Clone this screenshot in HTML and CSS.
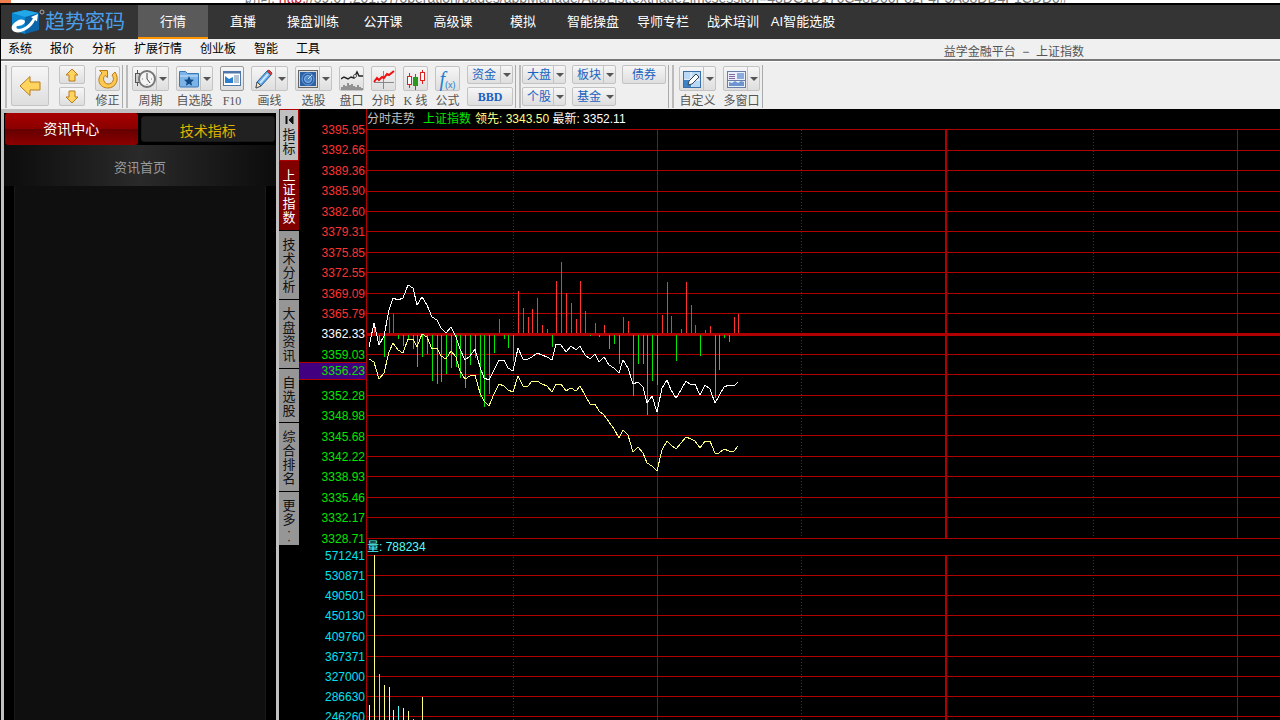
FILE: index.html
```html
<!DOCTYPE html>
<html lang="zh-CN">
<head>
<meta charset="utf-8">
<title>益学金融平台 - 上证指数</title>
<link rel="stylesheet" href="styles.css">
</head>
<body>
<div class="backdrop"><span class="backdrop-tab"></span><span class="backdrop-text">访问: <span class="backdrop-url">http:</span>//59.67.201.97/operation/pages/appManage/AppList.exthage2imcsession=43DC1D176C48D00F82F4F5A88DD4F1CDD0#</span></div>
<div class="app">
  <header class="top">
    <div class="logo">
      <svg width="34" height="26" viewBox="0 0 34 26"><path d="M1 4 14 1v24L1 21z" fill="#0a86cf"/><path d="M14 1 28 4v17l-14 4z" fill="#0b63a8"/><path d="M1 4 14 1 28 4 14 8z" fill="#22a8e8"/><path d="M27 5l-7 3 2 1.500C18 16 12 20 8 20c-3 0-3-2-2-3 3 0 7-1 8-4 0-3-5-3-8-1-5 3-7 7-4 10 5 4 18-1 22-11l2 1.500z" fill="#fff"/><circle cx="31" cy="3" r="2" fill="none" stroke="#aaa"/></svg>
      <span class="brand">趋势密码</span>
    </div>
    <nav class="nav">
      <a href="#" class="active">行情</a><a href="#">直播</a><a href="#">操盘训练</a><a href="#">公开课</a><a href="#">高级课</a><a href="#">模拟</a><a href="#">智能操盘</a><a href="#">导师专栏</a><a href="#">战术培训</a><a href="#">AI智能选股</a>
    </nav>
  </header>
  <div class="menubar">
    <button>系统</button><button>报价</button><button>分析</button><button>扩展行情</button><button>创业板</button><button>智能</button><button>工具</button>
    <h1 class="title">益学金融平台&nbsp; −&nbsp; 上证指数</h1>
  </div>
  <div class="toolbar">
    <div class="group nav-group">
      <button class="btn back" aria-label="后退"><svg width="24" height="24" viewBox="0 0 24 24"><path d="M2 12 12 2.500V8h10v8H12v5.500z" fill="#ffd45e" stroke="#b87a1c"/></svg></button>
      <div class="stack">
        <button class="btn small" aria-label="上"><svg width="14" height="14" viewBox="0 0 14 14"><path d="M7 1 13 7h-3v6H4V7H1z" fill="#ffd45e" stroke="#b87a1c"/></svg></button>
        <button class="btn small" aria-label="下"><svg width="14" height="14" viewBox="0 0 14 14"><path d="M7 13 13 7h-3V1H4v6H1z" fill="#ffd45e" stroke="#b87a1c"/></svg></button>
      </div>
      <div class="tool"><button class="btn icon" aria-labelledby="l1"><svg width="22" height="22" viewBox="0 0 22 22"><path d="M2.500 2.500h8v7L8 7.500C5 10 7 16 11 16c5 0 7-5 4-9l3-3c5 7 1 16-7 16C2 20-1 11 5 5z" fill="#ffc94d" stroke="#b87a1c"/></svg></button><span id="l1">修正</span></div>
    </div>
    <div class="group">
      <div class="tool wide"><button class="btn icon split" aria-labelledby="l2"><svg width="22" height="22" viewBox="0 0 22 22"><path d="M3.500 2v3M3.500 14v4" stroke="#555"/><rect x="1.500" y="5.500" width="4" height="9" fill="#ccc" stroke="#555"/><circle cx="13" cy="11" r="8" fill="#f4f4f4" stroke="#777" stroke-width="2"/><path d="M13 5v6l3 4" fill="none" stroke="#444"/><path d="M8 11h1M17 11h1M13 17v-1" stroke="#777"/></svg><i></i></button><span id="l2">周期</span></div>
      <div class="tool wide"><button class="btn icon split" aria-labelledby="l3"><svg width="22" height="22" viewBox="0 0 22 22"><path d="M1.500 18V3.500h6l2 2h11V18q0 1-1 1h-17q-1 0-1-1z" fill="#7db4e8" stroke="#3b78b8"/><path d="M2 8h18" stroke="#cfe5fa"/><path d="m11 8 1.500 3.500 3.500.3-2.700 2.400.8 3.600-3.100-2-3.100 2 .8-3.600L6 11.800l3.500-.3z" fill="#134b86"/></svg><i></i></button><span id="l3">自选股</span></div>
      <div class="tool narrow"><button class="btn icon framed" aria-labelledby="l4"><svg width="20" height="20" viewBox="0 0 20 20"><rect x="1.500" y="2.500" width="17" height="14" fill="#fff" stroke="#4f78a8"/><path d="M2 3.500h16" stroke="#4f78a8" stroke-width="2"/><path d="M3 7l4 3 4-2v6H3z" fill="#2a80cf"/><path d="M12 7h5M12 9h5M12 11h5M12 13h5" stroke="#6b89aa"/></svg></button><span id="l4" class="serif">F10</span></div>
      <div class="tool wide"><button class="btn icon split" aria-labelledby="l5"><svg width="22" height="22" viewBox="0 0 22 22"><path d="M4 14 14 3l4 4L8 18l-5 2z" fill="#62a8e4" stroke="#2f659b"/><path d="m14 3 2-1 3 3-1 2z" fill="#d63c3c" stroke="#a33"/><path d="m4 14 4 4-5 2z" fill="#f7e7c2" stroke="#555"/><path d="M7 15 15 6" stroke="#cce6ff" stroke-width="2"/></svg><i></i></button><span id="l5">画线</span></div>
      <div class="tool wide"><button class="btn icon split" aria-labelledby="l6"><svg width="22" height="22" viewBox="0 0 22 22"><rect x="1.500" y="2.500" width="19" height="17" fill="#ddd" stroke="#666"/><rect x="3" y="4" width="16" height="14" fill="#2e62a5"/><circle cx="11" cy="11" r="6" fill="none" stroke="#6a9fdc"/><circle cx="11" cy="11" r="3.500" fill="#4d88cc" stroke="#8dbcf0"/><path d="M11 11 15 7" stroke="#cfe5ff"/></svg><i></i></button><span id="l6">选股</span></div>
      <div class="tool"><button class="btn icon" aria-labelledby="l7"><svg width="22" height="22" viewBox="0 0 22 22"><path d="M0 11 3 9l4 2 3-2 3 1 3-6 2 4h4" fill="none" stroke="#222" stroke-width="1.500"/><circle cx="14" cy="8" r="1.500" fill="#fff" stroke="#555"/><path d="M1 22v-3M3 22v-5M5 22v-4M7 22v-7M9 22v-5M11 22v-6M13 22v-4M15 22v-3M17 22v-5M19 22v-3M21 22v-2" stroke="#777" stroke-width="1.500"/></svg></button><span id="l7">盘口</span></div>
      <div class="tool"><button class="btn icon" aria-labelledby="l8"><svg width="22" height="22" viewBox="0 0 22 22"><path d="M10.500 3v18M1 14.500h20" stroke="#888"/><path d="M1 14l3-4 2 2 3-3 2 1 3-4 2 1 5-4" fill="none" stroke="#e11" stroke-width="2"/></svg></button><span id="l8">分时</span></div>
      <div class="tool"><button class="btn icon" aria-labelledby="l9"><svg width="22" height="22" viewBox="0 0 22 22"><path d="M4.500 5v15M17.500 2v14" stroke="#d22"/><path d="M10.500 6v16" stroke="#282"/><rect x="2.500" y="8.500" width="4" height="8" fill="#fff" stroke="#d22"/><rect x="8" y="9" width="5" height="9" fill="#2a9a1c"/><rect x="15.500" y="4.500" width="4" height="8" fill="#fff" stroke="#d22"/></svg></button><span id="l9"><span class="serif">K</span> 线</span></div>
      <div class="tool"><button class="btn icon formula" aria-labelledby="l10"><em>f</em><small>(x)</small></button><span id="l10">公式</span></div>
      <div class="stack"><button class="btn text drop long">资金<i></i></button><button class="btn text bbd long">BBD</button></div>
    </div>
    <div class="group market">
      <div class="stack"><button class="btn text drop">大盘<i></i></button><button class="btn text drop">个股<i></i></button></div>
      <div class="stack"><button class="btn text drop">板块<i></i></button><button class="btn text drop plain">基金<i></i></button></div>
      <div class="stack"><button class="btn text">债券</button></div>
    </div>
    <div class="group last">
      <div class="tool wide"><button class="btn icon split" aria-labelledby="l11"><svg width="22" height="22" viewBox="0 0 22 22"><rect x="2.500" y="3.500" width="17" height="16" fill="#b9d8f5" stroke="#3b6fa5"/><path d="M3 12h16M10 4v15" stroke="#fff"/><rect x="3" y="12" width="7" height="7" fill="#3c83c8"/><path d="m8 13 7-7 3 3-7 7-4 1z" fill="#fff" stroke="#345"/></svg><i></i></button><span id="l11">自定义</span></div>
      <div class="tool wide"><button class="btn icon split" aria-labelledby="l12"><svg width="22" height="22" viewBox="0 0 22 22"><rect x="2.500" y="3.500" width="18" height="16" fill="#e9effa" stroke="#6a7fa5"/><path d="M4 6.500h6M4 8.500h6M4 10.500h6" stroke="#85689c"/><rect x="12" y="5" width="7" height="6" fill="#8cabdd"/><path d="M4 18v-4l3 1 3-2 3 2 3-2 3 1v4z" fill="#6e94cf"/><path d="M3 12.500h17" stroke="#6a7fa5"/></svg><i></i></button><span id="l12">多窗口</span></div>
    </div>
  </div>
  <main class="work">
    <aside class="side">
      <div class="side-tabs"><button class="side-tab on">资讯中心</button><button class="side-tab">技术指标</button></div>
      <a class="side-head" href="#">资讯首页</a>
      <div class="side-body"></div>
    </aside>
    <nav class="vtabs">
      <button class="vt first"><svg width="9" height="8" viewBox="0 0 9 8"><path d="M1 0h1v8H1zM8 0v8L4 4z" fill="#111" stroke="#111"/></svg><span>指标</span></button>
      <button class="vt on"><span>上证指数</span></button>
      <button class="vt"><span>技术分析</span></button>
      <button class="vt"><span>大盘资讯</span></button>
      <button class="vt three"><span>自选股</span></button>
      <button class="vt"><span>综合排名</span></button>
      <button class="vt more"><span>更多</span><small>·</small><small>·</small></button>
    </nav>
    <div class="axis">
      <ol class="prices">
        <li>3395.95</li><li>3392.66</li><li>3389.36</li><li>3385.90</li><li>3382.60</li><li>3379.31</li><li>3375.85</li><li>3372.55</li><li>3369.09</li><li>3365.79</li><li class="mid">3362.33</li><li class="dn">3359.03</li><li class="dn cur"><span>3356.23</span></li><li class="dn">3352.28</li><li class="dn">3348.98</li><li class="dn">3345.68</li><li class="dn">3342.22</li><li class="dn">3338.93</li><li class="dn">3335.46</li><li class="dn">3332.17</li><li class="dn">3328.71</li>
      </ol>
      <ol class="volumes"><li>571241</li><li>530871</li><li>490501</li><li>450130</li><li>409760</li><li>367371</li><li>327000</li><li>286630</li><li>246260</li></ol>
    </div>
    <section class="chart">
      <p class="legend"><span class="c-grey">分时走势</span><span class="c-green">上证指数</span><span class="quote"><b>领先: 3343.50</b> 最新: 3352.11</span></p>
      <svg class="plot" width="3000" height="591" viewBox="366 129 3000 591" shape-rendering="crispEdges" fill="none">
        <path class="grid" d="M366 129.500h3000M366 150.500h3000M366 170.500h3000M366 191.500h3000M366 211.500h3000M366 231.500h3000M366 252.500h3000M366 272.500h3000M366 293.500h3000M366 313.500h3000M366 354.500h3000M366 374.500h3000M366 395.500h3000M366 415.500h3000M366 435.500h3000M366 456.500h3000M366 476.500h3000M366 497.500h3000M366 517.500h3000M366 538.500h3000M366 555.500h3000M366 575.500h3000M366 595.500h3000M366 615.500h3000M366 635.500h3000M366 656.500h3000M366 676.500h3000M366 696.500h3000M366 716.500h3000"/>
        <path class="grid" d="M657.500 129v410M657.500 555v165M1237.500 129v410M1237.500 555v165"/>
        <path class="grid thick" d="M946 129v410M946 555v165"/>
        <path class="grid dots" d="M513.500 130v409M513.500 557v163M801.500 130v409M801.500 557v163M1093.500 130v409M1093.500 557v163"/>
        <path class="grid zero" d="M366 334.500h3000"/>
        <path class="up" d="M374.500 325V333M389.500 317V333M393.500 314V333M499.500 319V333M518.500 291V333M523.500 308V333M528.500 317V333M532.500 309V333M537.500 298V333M542.500 325V333M547.500 329V333M556.500 281V333M561.500 262V333M566.500 293V333M571.500 303V333M576.500 319V333M580.500 281V333M585.500 311V333M595.500 323V333M604.500 325V333M623.500 317V333M628.500 321V333M662.500 315V333M667.500 282V333M671.500 316V333M681.500 329V333M686.500 282V333M691.500 305V333M695.500 325V333M705.500 330V333M710.500 326V333M734.500 317V333M738.500 314V333"/>
        <path class="down" d="M379.500 335V343M384.500 335V357M398.500 335V339M403.500 335V346M408.500 335V340M413.500 335V349M417.500 335V367M422.500 335V357M427.500 335V354M432.500 335V381M437.500 335V384M441.500 335V382M446.500 335V374M451.500 335V368M456.500 335V367M460.500 335V378M465.500 335V388M470.500 335V365M475.500 335V358M480.500 335V397M484.500 335V407M489.500 335V394M494.500 335V353M504.500 335V339M508.500 335V348M513.500 335V361M552.500 335V347M590.500 335V336M599.500 335V337M609.500 335V349M614.500 335V344M619.500 335V364M633.500 335V396M638.500 335V364M643.500 335V364M647.500 335V415M652.500 335V381M657.500 335V385M676.500 335V361M700.500 335V356M715.500 335V398M719.500 335V370M724.500 335V338M729.500 335V342"/>
        <polyline class="lead" points="369,359 374,362 379,379 384,373 389,352 393,343 398,350 403,353 408,339 413,339 417,347 422,334 427,337 432,349 437,348 441,356 446,359 451,351 456,357 460,371 465,379 470,376 475,375 480,393 484,401 489,406 494,394 499,384 504,386 508,390 513,392 518,376 523,386 528,386 532,381 537,381 542,384 547,386 552,392 556,384 561,384 566,391 571,388 576,391 580,386 585,395 590,404 595,404 599,411 604,415 609,422 614,429 619,438 623,430 628,435 633,452 638,447 643,453 647,463 652,466 657,471 662,450 667,441 671,445 676,449 681,443 686,437 691,439 695,441 700,448 705,441 710,441 715,453 719,453 724,449 729,451 734,451 738,446"/>
        <polyline class="last-price" points="369,347 374,323 379,345 384,336 389,310 393,298 398,300 403,298 408,285 413,288 417,305 422,297 427,305 432,317 437,320 441,328 446,333 451,327 456,337 460,349 465,360 470,356 475,349 480,367 484,378 489,380 494,370 499,360 504,360 508,368 513,371 518,348 523,359 528,359 532,357 537,353 542,355 547,357 552,360 556,344 561,345 566,352 571,346 576,350 580,346 585,355 590,359 595,354 599,362 604,357 609,365 614,368 619,373 623,360 628,368 633,384 638,382 643,387 647,403 652,396 657,412 662,388 667,380 671,390 676,398 681,390 686,381 691,385 695,384 700,395 705,385 710,389 715,403 719,396 724,387 729,385 734,386 738,382"/>
        <path class="last-price" d="M369.500 705V720"/>
        <path class="lead" d="M374.500 555V720M384.500 685V720M389.500 687V720M393.500 710V720M403.500 708V720M408.500 711V720M422.500 697V720"/>
        <path class="vol" d="M379.500 674V720M398.500 706V720M413.500 719V720"/>
      </svg>
      <p class="vol-label">量: 788234</p>
    </section>
  </main>
</div>
</body>
</html>
```
FILE: styles.css
```css
* { box-sizing: border-box; }
body {
  margin: 0;
  height: 100vh;
  display: flex;
  flex-direction: column;
  overflow: hidden;
  background: #000;
  font: 12px/14px "Liberation Sans", "Noto Sans CJK SC", sans-serif;
}
button { font: inherit; color: inherit; border: 0; padding: 0; background: none; }
a { color: inherit; text-decoration: none; }
ol { list-style: none; margin: 0; padding: 0; }
svg { flex: none; display: block; }

.backdrop { flex: none; height: 3px; overflow: hidden; background: #fff; display: flex; align-items: flex-end; gap: 232px; }
.backdrop-tab { width: 11px; height: 3px; background: #f08050; }
.backdrop-text { font-size: 14px; line-height: 10px; white-space: nowrap; color: #777; }
.backdrop-url { color: #c22; }

.app { flex: 1; min-height: 0; display: flex; flex-direction: column; border-top: 2px solid #000; border-left: 1px solid #000; }
.top { flex: none; display: flex; height: 34px; background: #343434; color: #fff; }
.logo { display: flex; align-items: center; width: 137px; padding-left: 10px; }
.brand { color: #4a9fe8; font-size: 20px; line-height: 24px; }
.nav { display: flex; font-size: 13px; }
.nav a { width: 70px; padding-top: 2px; display: flex; align-items: center; justify-content: center; white-space: nowrap; border-bottom: 2px solid transparent; }
.nav .active { background: #5a5a5a; border-color: #ff9500; }

.menubar { flex: none; display: flex; align-items: center; gap: 18px; height: 20px; padding-left: 7px; background: #f0f0f0; color: #000; }
.title { margin: 0 196px 0 auto; padding-top: 5px; font-size: 12px; font-weight: 400; color: #555; }

.toolbar { flex: none; display: flex; height: 50px; padding: 4px 0 0 4px; background: #efefef; border-top: 2px solid #777; box-shadow: inset 0 1px #fff; color: #555; }
.group { display: flex; gap: 7px; height: 43px; padding: 0 2px 0 4px; margin-right: 3px; border-right: 1px solid #aaa; border-left: 2px solid #bbb; }
.nav-group { gap: 10px; }
.market { gap: 6px; padding-left: 1px; }
.last { padding-left: 5px; }
.btn { display: flex; align-items: center; justify-content: center; border: 1px solid #c3c3c3; border-radius: 2px; background: linear-gradient(#f6f6f6, #dedede); }
.back { width: 38px; height: 40px; margin-top: 1px; }
.stack { display: flex; flex-direction: column; gap: 3px; }
.small { width: 26px; height: 19px; }
.tool { width: 25px; display: flex; flex-direction: column; align-items: center; gap: 3px; padding-top: 1px; white-space: nowrap; }
.tool.wide { width: 37px; }
.tool.narrow { width: 24px; }
.icon { width: 100%; height: 25px; }
.split { justify-content: space-between; padding-left: 1px; }
.btn i { display: flex; align-items: center; justify-content: center; width: 12px; height: 100%; border-left: 1px solid #c3c3c3; }
.btn i::before { content: ""; border: 4px solid transparent; border-top: 4px solid #555; border-bottom: 0; }
.btn.plain i { border-color: transparent; }
.framed { border-color: #999; }
.serif { font-family: "Liberation Serif", serif; }
.formula em { font: italic 20px/20px "Liberation Serif", serif; color: #2080cc; }
.formula small { font: 9px/10px "Liberation Sans", sans-serif; color: #2080cc; align-self: flex-end; }
.text { width: 44px; height: 19px; color: #1a62c0; }
.long { width: 46px; }
.drop { justify-content: space-between; padding-left: 4px; }
.bbd { font: bold 12px/14px "Liberation Serif", serif; }

.work { flex: 1; min-height: 0; display: flex; overflow: hidden; }
.side { flex: none; width: 278px; display: flex; flex-direction: column; border: 3px solid #c0c0c0; border-top-width: 4px; border-bottom: 0; background: #000; }
.side-tabs { display: flex; height: 32px; gap: 3px; padding-left: 1px; font-size: 14px; line-height: 16px; }
.side-tab { flex: 1; margin: 3px 1px 3px 0; padding-top: 3px; border: 1px solid #191919; border-radius: 3px; background: #212121; color: #e0b400; }
.side-tab.on { margin: 0; padding: 0; border: 0; background: linear-gradient(#a80000, #8a0000 50%, #600 51%, #8c0000); color: #fff; }
.side-head { height: 41px; display: flex; align-items: center; justify-content: center; padding-top: 4px; font-size: 13px; color: #999; background: linear-gradient(90deg, #0c0c0c, #2a2a2a 50%, #0c0c0c); }
.side-body { flex: 1; margin: 0 10px; border: 1px solid #1a1a1a; border-width: 0 1px; background: #0f0f0f; }

.vtabs { flex: none; width: 20px; display: flex; flex-direction: column; }
.vt { flex: none; height: 69px; padding-top: 2px; display: flex; flex-direction: column; align-items: center; justify-content: center; background: #969696; color: #111; border-bottom: 1px solid #000; }
.vt span { width: 13px; font-size: 13px; line-height: 14px; }
.vt small { font-size: 12px; line-height: 9px; }
.vt.first { height: 52px; gap: 4px; background: #c0c0c0; border: 1px solid #b00000; }
.vt.on { height: 70px; background: #800000; color: #fff; }
.vt.three { height: 54px; }
.vt.more { height: 53px; padding-top: 6px; border: 0; }

.axis { flex: none; width: 67px; padding-top: 14px; color: #ff3232; text-align: right; }
.prices { height: 423px; display: flex; flex-direction: column; justify-content: space-between; padding-right: 1px; }
.mid { color: #fff; }
.dn { color: #00e600; }
.cur { position: relative; height: 14px; }
.cur span { position: absolute; right: -1px; top: -6px; width: 67px; padding: 1px 1px 1px 0; border: 1px solid #b00000; border-width: 1px 0; background: #400080; }
.volumes { height: 175px; margin-top: 3px; display: flex; flex-direction: column; justify-content: space-between; padding-right: 1px; color: #00e0f0; }

.chart { flex: 1; min-width: 0; position: relative; overflow: hidden; border-left: 1px solid #b00000; background: #000; color: #fff; }
.legend { margin: 0; height: 20px; padding-top: 2px; line-height: 16px; display: flex; gap: 8px; white-space: nowrap; }
.quote { margin-left: -4px; }
.legend b { font-weight: 400; color: #ffff80; }
.c-grey { color: #c0c0c0; }
.c-green { color: #00e600; }
.plot { margin-left: -1px; }
.vol-label { position: absolute; left: 0; top: 431px; margin: 0; color: #54fcfc; }
.grid { stroke: #b00000; }
.thick { stroke-width: 2; }
.zero { stroke-width: 3; }
.dots { stroke-dasharray: 1 2; }
.up { stroke: #ff3232; }
.down { stroke: #00e600; }
.lead { stroke: #ffff80; }
.last-price { stroke: #fff; }
.vol { stroke: #54fcfc; }
```
